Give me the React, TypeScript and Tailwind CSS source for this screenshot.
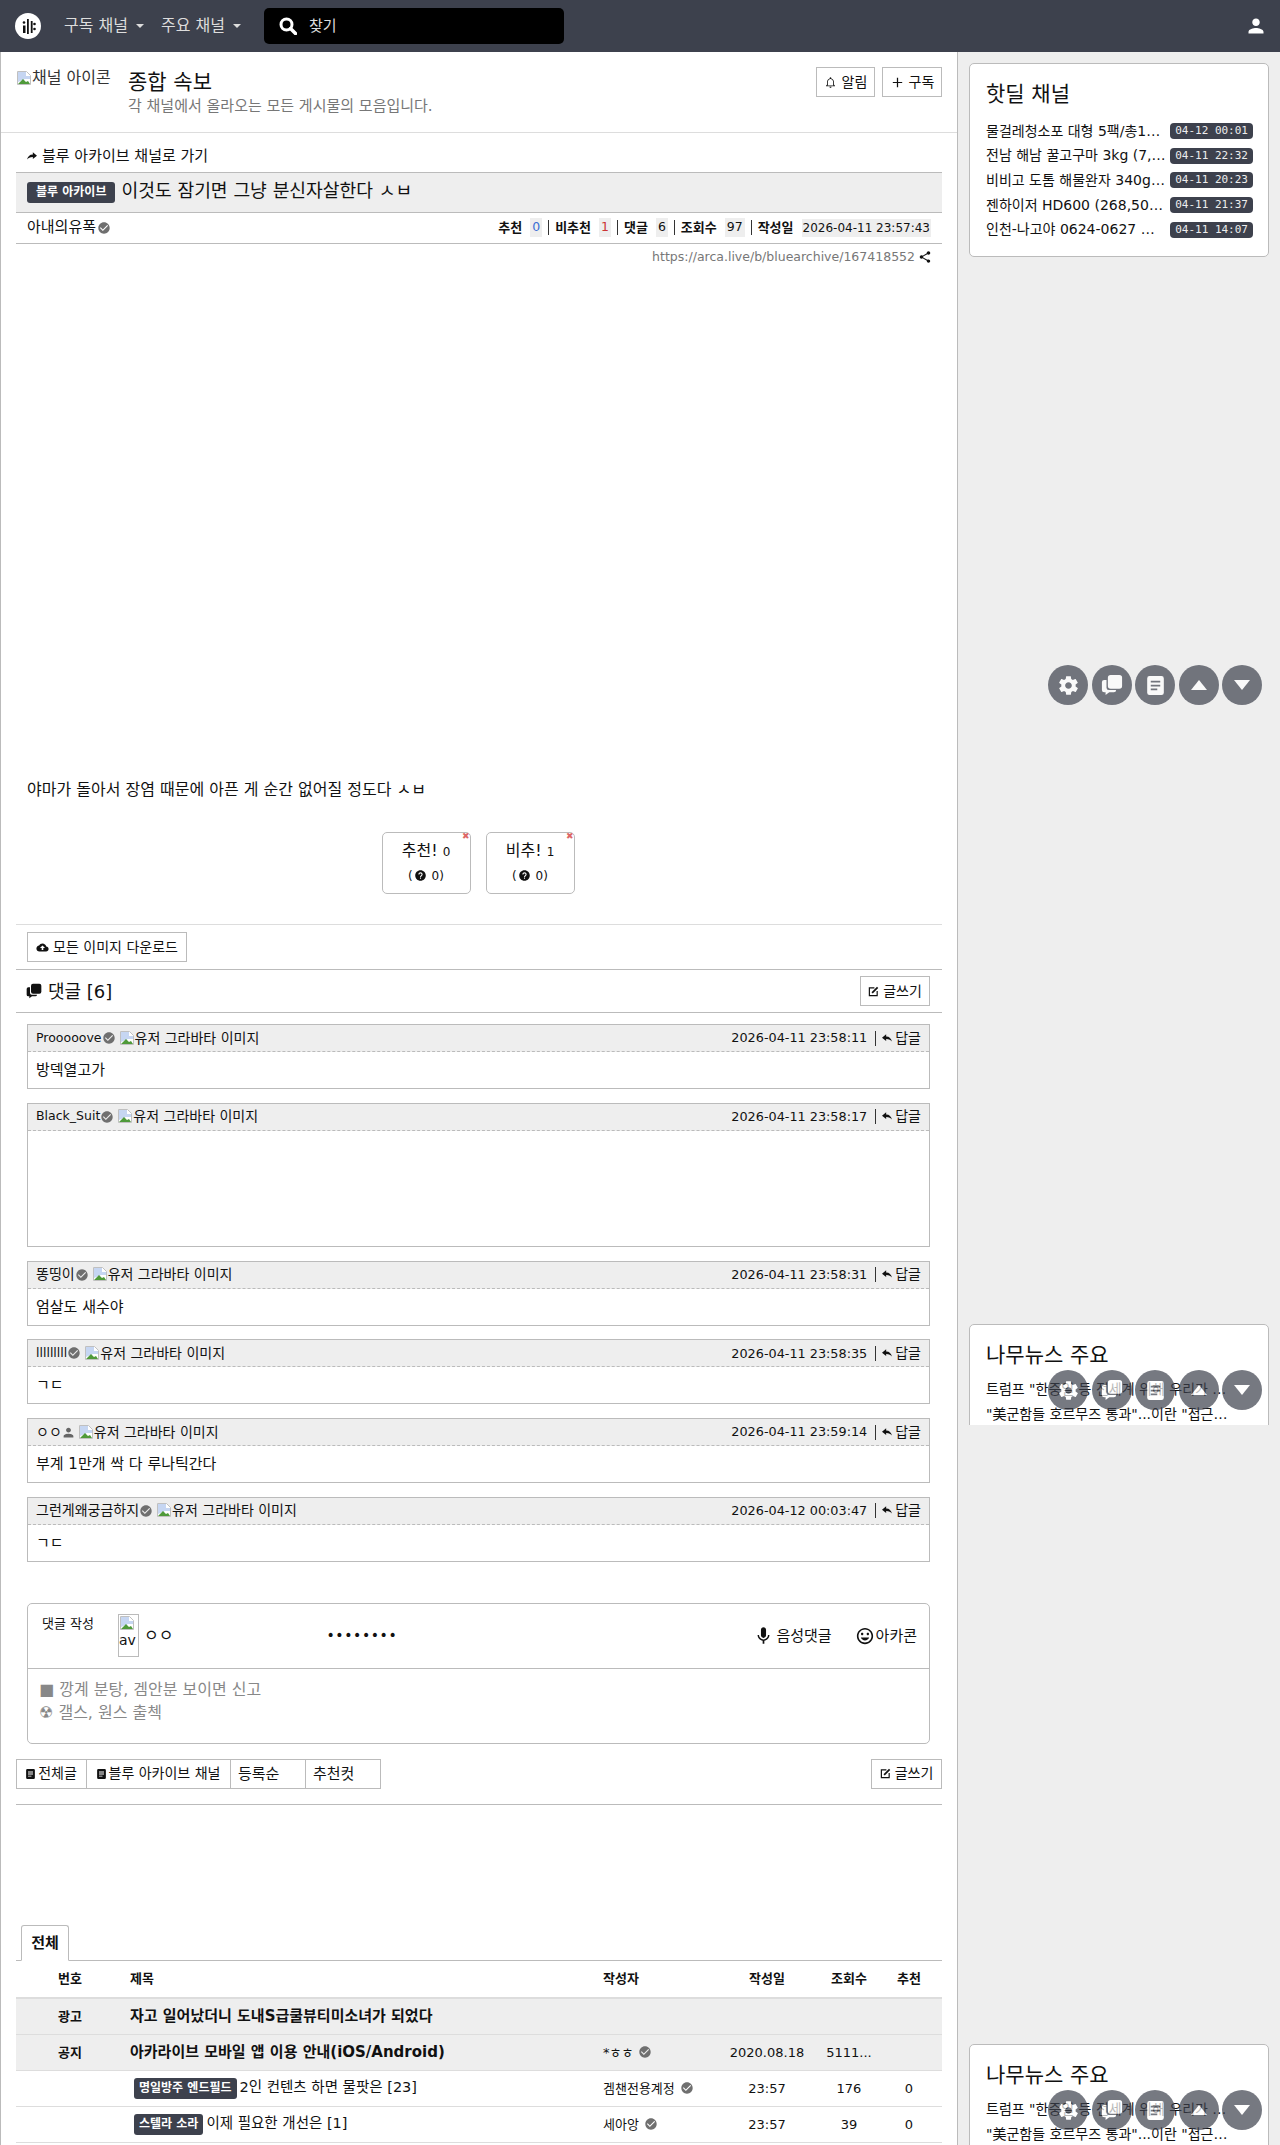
import React from "react";
import {
  IoMdSettings,
  IoMdCheckmarkCircle,
  IoMdShare,
  IoMdHelpCircle,
  IoMdMic,
  IoMdPerson,
  IoMdAdd,
  IoMdNotificationsOutline,
  IoMdHappy,
  IoMdCloudUpload,
} from "react-icons/io";

const dealRows = [
  ["물걸레청소포 대형 5팩/총100매 무료배송", "04-12 00:01"],
  ["전남 해남 꿀고구마 3kg (7,900원/무료)", "04-11 22:32"],
  ["비비고 도톰 해물완자 340g 3개 무료배송", "04-11 20:23"],
  ["젠하이저 HD600 (268,500원/무료배송)", "04-11 21:37"],
  ["인천-나고야 0624-0627 하계 특가 항공권", "04-11 14:07"],
];

const comments = [
  { name: "Prooooove", latin: true, time: "2026-04-11 23:58:11", body: "방덱열고가", h: "h-[36px]" },
  { name: "Black_Suit", latin: true, time: "2026-04-11 23:58:17", body: "", h: "h-[115px]" },
  { name: "똥띵이", time: "2026-04-11 23:58:31", body: "엄살도 새수야", h: "h-[36px]" },
  { name: "lllllllll", latin: true, time: "2026-04-11 23:58:35", body: "ㄱㄷ", h: "h-[36px]" },
  { name: "ㅇㅇ", time: "2026-04-11 23:59:14", body: "부계 1만개 싹 다 루나틱간다", h: "h-[36px]", guest: true },
  { name: "그런게왜궁금하지", time: "2026-04-12 00:03:47", body: "ㄱㄷ", h: "h-[36px]" },
];

const rowGrid = "grid grid-cols-[108px_479px_120px_88px_76px_44px] items-center";

const BrokenImage = () => (
  <svg viewBox="0 0 16 16" className="inline-block h-4 w-4 shrink-0 align-[-3px]">
    <path d="M1.500 1.500h9l4 4v9h-13z" fill="#fff" stroke="#c0c0c0" />
    <path d="M2 2h8v4h4v3L9 9 2 12z" fill="#c6d6f2" />
    <path d="M2 14l5-5 3 3 2-1 2 3z" fill="#4f9a3a" />
  </svg>
);

const Verified = () => <IoMdCheckmarkCircle className="inline-block h-[14px] w-[14px] shrink-0 text-[#6f6f6f]" />;

const ComposeIcon = () => (
  <svg viewBox="0 0 12 12" className="h-[11px] w-[11px] shrink-0" fill="none" stroke="#111">
    <path d="M7 2H1.500v8.500H10V5.500" strokeWidth="1.300" />
    <path d="M4.500 7.500L10.500 1.500" strokeWidth="2" />
  </svg>
);

const DocIcon = ({ className }: { className: string }) => (
  <svg viewBox="0 0 14 16" className={className}>
    <path
      fillRule="evenodd"
      d="M2 0h10a2 2 0 012 2v12a2 2 0 01-2 2H2a2 2 0 01-2-2V2a2 2 0 012-2zm1 4v1.500h8V4zm0 3.300v1.500h8V7.300zm0 3.300v1.500h5.500v-1.500z"
      fill="currentColor"
    />
  </svg>
);

const ChatIcon = ({ className }: { className: string }) => (
  <svg viewBox="0 0 24 24" className={className} fill="currentColor">
    <rect x="7.500" y="1" width="15.500" height="15" rx="3" />
    <path d="M6 6.500H3.500a2.500 2.500 0 00-2.500 2.500v8.500A2.500 2.500 0 003.500 20H5v3l4-3h5a2.500 2.500 0 002.500-2.500H8.500A2.500 2.500 0 016 15z" />
  </svg>
);

const ReplyIcon = () => (
  <svg viewBox="0 0 12 10" className="h-[9px] w-[10px] shrink-0" fill="#111">
    <path d="M0 4l5-4v2.500c4 0 6 2.500 7 6-1.500-2-3.500-3-7-3V8z" />
  </svg>
);

const FloatButtons = ({ top }: { top: string }) => (
  <div className={`absolute right-[18px] flex gap-[3.500px] text-white ${top}`}>
    <span className="flex h-10 w-10 items-center justify-center rounded-full bg-[#3d414d] opacity-70">
      <IoMdSettings className="h-[23px] w-[23px]" />
    </span>
    <span className="flex h-10 w-10 items-center justify-center rounded-full bg-[#3d414d] opacity-70">
      <ChatIcon className="h-[22px] w-[22px]" />
    </span>
    <span className="flex h-10 w-10 items-center justify-center rounded-full bg-[#3d414d] opacity-70">
      <DocIcon className="h-[19px] w-[17px]" />
    </span>
    <span className="flex h-10 w-10 items-center justify-center rounded-full bg-[#3d414d] opacity-70">
      <svg viewBox="0 0 16 10" className="h-[10px] w-4" fill="currentColor"><path d="M8 0l8 10H0z" /></svg>
    </span>
    <span className="flex h-10 w-10 items-center justify-center rounded-full bg-[#3d414d] opacity-70">
      <svg viewBox="0 0 16 10" className="h-[10px] w-4" fill="currentColor"><path d="M0 0h16L8 10z" /></svg>
    </span>
  </div>
);

const NewsCard = ({ wrapper }: { wrapper: string }) => (
  <div className={`overflow-hidden ${wrapper}`}>
    <div className="h-[194px] w-[300px] rounded-[5px] border border-[#bbb] bg-white pl-4 pr-[30px] pt-[17px]">
      <h3 className="text-[21px] leading-[26px]">나무뉴스 주요</h3>
      <p className="mt-[12px] truncate text-[14px] leading-[19px]">트럼프 "한중일 등 전세계 위해 우리가 호르무즈 통과"</p>
      <p className="mt-[6px] truncate text-[14px] leading-[19px]">"美군함들 호르무즈 통과"...이란 "접근하면 공격"</p>
    </div>
  </div>
);

const TableRow = ({
  no,
  title,
  badge,
  author,
  date,
  views,
  votes,
  notice,
}: {
  no?: string;
  title: string;
  badge?: string;
  author?: string;
  date?: string;
  views?: string;
  votes?: string;
  notice?: boolean;
}) => (
  <div className={`${rowGrid} h-9 border-b border-[#ddd] text-[13px] ${notice ? "bg-[#eee]" : ""}`}>
    <span className="text-center text-[13px] font-bold">{no}</span>
    <span className={`flex items-center gap-[3px] ${notice ? "pl-[6px] text-[15px] font-bold" : "pl-[10px] text-[14.500px]"}`}>
      {badge && (
        <span className="rounded-[3px] bg-[#3d414d] px-[5px] py-[2px] text-[12px] font-bold leading-[17px] text-white">
          {badge}
        </span>
      )}
      {title}
    </span>
    <span className="flex items-center gap-[5px] text-[13px]">
      {author}
      {author && <Verified />}
    </span>
    <span className="text-center">{date}</span>
    <span className="truncate text-center">{views}</span>
    <span className="text-center">{votes}</span>
  </div>
);

export default function App() {
  return (
    <div className="relative h-[2145px] overflow-hidden bg-white font-['DejaVu_Sans','Noto_Sans_CJK_KR',sans-serif] text-[#111]">
      {/* top nav */}
      <header className="flex h-[52px] items-center bg-[#3d414d] pl-[15px] pr-[14px] text-white">
        <svg viewBox="0 0 26 26" className="h-[26px] w-[26px] shrink-0">
          <circle cx="13" cy="13" r="13" fill="#fff" />
          <path d="M12 6h1.800v15H12zM8 12.500h2.500V20H8zM15.800 8h1.800v12h-1.800z" fill="#111" />
          <circle cx="9" cy="9.500" r="1.300" fill="#111" />
          <circle cx="19.500" cy="11" r="1.300" fill="#111" />
          <circle cx="19.500" cy="16" r="1.300" fill="#111" />
        </svg>
        <nav className="ml-[23px] flex items-center gap-[17px] text-[16px] leading-[22px] text-[#ddd]">
          <span className="flex items-center gap-[8px]">
            구독 채널
            <span className="h-0 w-0 border-x-[4px] border-t-[4px] border-x-transparent border-t-[#ddd]" />
          </span>
          <span className="flex items-center gap-[8px]">
            주요 채널
            <span className="h-0 w-0 border-x-[4px] border-t-[4px] border-x-transparent border-t-[#ddd]" />
          </span>
        </nav>
        <div className="ml-[23px] flex h-9 w-[300px] items-center gap-[12px] rounded-[5px] bg-black pl-[15px] text-[15px] text-[#ddd]">
          <svg viewBox="0 0 18 18" className="h-[18px] w-[18px]" fill="none" stroke="#fff">
            <circle cx="7.500" cy="7.500" r="5.500" strokeWidth="3" />
            <path d="M11.500 11.500L16.500 16.500" strokeWidth="3.500" strokeLinecap="round" />
          </svg>
          찾기
        </div>
        <IoMdPerson className="ml-auto h-[20px] w-[20px] text-white" />
      </header>

      <div className="flex">
        {/* main column */}
        <main className="w-[958px] shrink-0 border-x border-[#bbb]">
          <section className="flex h-[81px] border-b border-[#ddd] pl-[15px] pr-[15px] pt-[15px]">
            <div className="mt-px flex h-[20px] w-[96px] shrink-0 items-center overflow-hidden whitespace-nowrap text-[16px] text-[#333]">
              <BrokenImage />
              채널 아이콘
            </div>
            <div className="ml-[16px] flex-1 pt-[2px]">
              <h1 className="text-[21px] leading-[26px]">종합 속보</h1>
              <p className="mt-[1px] text-[15px] leading-[20px] text-[#777]">각 채널에서 올라오는 모든 게시물의 모음입니다.</p>
            </div>
            <div className="flex gap-[7px]">
              <span className="flex h-[30px] w-[59px] items-center justify-center gap-[5px] border border-[#bbb] text-[14px]">
                <IoMdNotificationsOutline className="h-[13px] w-[13px]" />
                알림
              </span>
              <span className="flex h-[30px] w-[60px] items-center justify-center gap-[4px] border border-[#bbb] text-[14px]">
                <IoMdAdd className="h-[15px] w-[15px]" />
                구독
              </span>
            </div>
          </section>

          <div className="mx-[15px]">
            <div className="flex h-[39px] items-center gap-[5px] pl-[11px] pt-[7px] text-[15px]">
              <svg viewBox="0 0 12 10" className="h-[9px] w-[10px] -scale-x-100" fill="#111">
                <path d="M0 4l5-4v2.500c4 0 6 2.500 7 6-1.500-2-3.500-3-7-3V8z" />
              </svg>
              블루 아카이브 채널로 가기
            </div>
            <div className="flex h-[41px] items-center gap-[6px] border-y border-[#bbb] bg-[#eee] pl-[11px] text-[18.200px]">
              <span className="rounded-[3px] bg-[#3d414d] px-[9px] text-[12px] font-bold leading-[21px] text-white">블루 아카이브</span>
              <span className="-mt-[3px]">이것도 잠기면 그냥 분신자살한다 ㅅㅂ</span>
            </div>
            <div className="-mt-px flex h-[32px] items-center justify-between border-b border-[#bbb] px-[11px] text-[12.500px]">
              <span className="flex items-center gap-[1px] text-[15px]">
                아내의유폭
                <Verified />
              </span>
              <span className="flex items-center gap-[6px]">
                <b className="text-[13px]">추천</b>
                <span className="ml-[2px] bg-[#eee] px-[2px] text-[#3b6fd4]">0</span>
                <span className="h-[15px] border-l border-[#333]" />
                <b className="text-[13px]">비추천</b>
                <span className="ml-[2px] bg-[#eee] px-[2px] text-[#c33]">1</span>
                <span className="h-[15px] border-l border-[#333]" />
                <b className="text-[13px]">댓글</b>
                <span className="ml-[2px] bg-[#eee] px-[2px]">6</span>
                <span className="h-[15px] border-l border-[#333]" />
                <b className="text-[13px]">조회수</b>
                <span className="ml-[2px] bg-[#eee] px-[2px]">97</span>
                <span className="h-[15px] border-l border-[#333]" />
                <b className="text-[13px]">작성일</b>
                <span className="ml-[2px] bg-[#eee] px-[1px] text-[12px]">2026-04-11 23:57:43</span>
              </span>
            </div>
            <div className="flex h-[26px] items-center justify-end gap-[3px] pr-[10px] text-[12.500px] text-[#777]">
              https://arca.live/b/bluearchive/167418552
              <IoMdShare className="h-[14px] w-[14px] text-[#111]" />
            </div>

            {/* article body */}
            <div className="pl-[11px] pt-[509px] text-[16px] leading-[22px]">야마가 돌아서 장염 때문에 아픈 게 순간 없어질 정도다 ㅅㅂ</div>
            <div className="mt-[31px] flex justify-center gap-[15px] pr-[2px]">
              {[
                ["추천!", "0"],
                ["비추!", "1"],
              ].map(([label, count]) => (
                <div key={label} className="relative flex h-[62px] w-[89px] flex-col items-center justify-center rounded-[5px] border border-[#bbb] leading-[24px]">
                  <span className="absolute -top-[2px] right-0 text-[9px] leading-[10px] text-[#d66]">✖</span>
                  <span className="text-[16px]">
                    {label} <span className="text-[12px]">{count}</span>
                  </span>
                  <span className="flex items-center text-[12px]">
                    (<IoMdHelpCircle className="mx-[1px] h-[13px] w-[13px]" />&nbsp;0)
                  </span>
                </div>
              ))}
            </div>

            <div className="mt-[30px] border-y border-t-[#ddd] border-b-[#bbb] pb-[7px] pl-[11px] pt-[7px]">
              <span className="flex h-[30px] w-[160px] items-center justify-center gap-[4px] border border-[#bbb] text-[14px]">
                <IoMdCloudUpload className="h-[13px] w-[13px]" />
                모든 이미지 다운로드
              </span>
            </div>
            <div className="flex h-[43px] items-center justify-between border-b border-[#bbb] pl-[10px] pr-[12px]">
              <span className="flex items-center gap-[6px] text-[18px]">
                <ChatIcon className="h-[16px] w-[16px]" />
                댓글 [6]
              </span>
              <span className="flex h-[30px] w-[70px] items-center justify-center gap-[4px] border border-[#bbb] text-[14px]">
                <ComposeIcon />
                글쓰기
              </span>
            </div>

            {/* comments */}
            <div className="ml-[11px] mr-[12px] mt-[11px] flex flex-col gap-[13.750px]">
              {comments.map((c) => (
                <div key={c.time} className="border border-[#bbb]">
                  <div className="flex h-[27px] items-center justify-between border-b border-dashed border-[#bbb] bg-[#eee] px-[8px] text-[14px]">
                    <span className="flex items-center whitespace-nowrap">
                      <span className={c.latin ? "text-[12.500px]" : ""}>{c.name}</span>
                      {c.guest ? <IoMdPerson className="h-[13px] w-[13px] text-[#666]" /> : <Verified />}
                      <span className="ml-[3px]">
                        <BrokenImage />
                        유저 그라바타 이미지
                      </span>
                    </span>
                    <span className="flex items-center gap-[8px]">
                      <span className="text-[12.800px]">{c.time}</span>
                      <span className="h-[15px] border-l border-[#333]" />
                      <span className="-ml-[2px] flex items-center gap-[3px]">
                        <ReplyIcon />
                        답글
                      </span>
                    </span>
                  </div>
                  <div className={`${c.h} px-[8px] pt-[8px] text-[15px] leading-[20px]`}>{c.body}</div>
                </div>
              ))}
            </div>

            {/* comment form */}
            <div className="ml-[11px] mr-[12px] mt-[41px] h-[141px] rounded-[5px] border border-[#bbb]">
              <div className="relative flex h-[65px] items-center border-b border-[#bbb] pr-[12px]">
                <span className="absolute left-[14px] top-[10px] text-[13px]">댓글 작성</span>
                <div className="ml-[90px] h-[43px] w-[21px] overflow-hidden border border-[#bbb] text-[14px] leading-[17px]">
                  <BrokenImage />
                  av
                </div>
                <span className="ml-[5px] text-[16px]">ㅇㅇ</span>
                <span className="ml-[153px] text-[14px] tracking-[0.6px]">••••••••</span>
                <span className="ml-auto flex items-center gap-[3px] text-[15px]">
                  <IoMdMic className="h-[19px] w-[19px]" />
                  음성댓글
                </span>
                <span className="ml-[23px] flex items-center gap-[1px] text-[15px]">
                  <IoMdHappy className="h-[20px] w-[20px]" />
                  아카콘
                </span>
              </div>
              <div className="pl-[11px] pt-[9px] text-[16px] leading-[23px] text-[#888]">
                <p>■ 깡계 분탕, 겜안분 보이면 신고</p>
                <p>☢ 갤스, 원스 출첵</p>
              </div>
            </div>

            {/* list toolbar */}
            <div className="mt-[15px] flex h-[46px] border-b border-[#bbb] text-[14px]">
              <span className="flex h-[30px] w-[71px] items-center justify-center gap-[3px] border border-[#bbb]">
                <DocIcon className="h-[10px] w-[9px]" />
                전체글
              </span>
              <span className="-ml-px flex h-[30px] w-[145px] items-center justify-center gap-[3px] border border-[#bbb]">
                <DocIcon className="h-[10px] w-[9px]" />
                블루 아카이브 채널
              </span>
              <span className="-ml-px flex h-[30px] w-[76px] items-center border border-[#bbb] pl-[7px] text-[15px]">등록순</span>
              <span className="-ml-px flex h-[30px] w-[76px] items-center border border-[#bbb] pl-[7px] text-[15px]">추천컷</span>
              <span className="ml-auto flex h-[30px] w-[71px] items-center justify-center gap-[4px] border border-[#bbb]">
                <ComposeIcon />
                글쓰기
              </span>
            </div>

            {/* article list */}
            <div className="mt-[120px] flex h-[36px] items-end border-b border-[#bbb] pl-[5px]">
              <span className="-mb-px flex h-[36px] w-[48px] items-center justify-center rounded-t-[3px] border border-b-white border-[#bbb] text-[15px] font-bold">전체</span>
            </div>
            <div className={`${rowGrid} h-[38px] border-b-2 border-[#ddd] text-[13px] font-bold`}>
              <span className="text-center">번호</span>
              <span className="pl-[6px]">제목</span>
              <span>작성자</span>
              <span className="text-center">작성일</span>
              <span className="text-center">조회수</span>
              <span className="text-center">추천</span>
            </div>
            <TableRow no="광고" title="자고 일어났더니 도내S급쿨뷰티미소녀가 되었다" notice />
            <TableRow no="공지" title="아카라이브 모바일 앱 이용 안내(iOS/Android)" author="*ㅎㅎ" date="2020.08.18" views="5111..." notice />
            <TableRow title="2인 컨텐츠 하면 물팟은 [23]" badge="명일방주 엔드필드" author="겜챈전용계정" date="23:57" views="176" votes="0" />
            <TableRow title="이제 필요한 개선은 [1]" badge="스텔라 소라" author="세아앙" date="23:57" views="39" votes="0" />
          </div>
        </main>

        {/* right column */}
        <aside className="flex-1 bg-[#eee] pl-[11px] pt-[11px]">
          <div className="h-[194px] w-[300px] rounded-[5px] border border-[#bbb] bg-white pl-4 pr-[15px] pt-[17px]">
            <h3 className="text-[21px] leading-[26px]">핫딜 채널</h3>
            <div className="mt-[14px] flex flex-col gap-[4.700px]">
              {dealRows.map(([title, date]) => (
                <div key={date} className="flex h-5 items-center gap-[3px] text-[14px]">
                  <span className="min-w-0 flex-1 truncate">{title}</span>
                  <span className="shrink-0 rounded-[4px] bg-[#3d414d] px-[5px] font-['DejaVu_Sans_Mono',monospace] text-[11px] leading-[16px] text-[#eee]">{date}</span>
                </div>
              ))}
            </div>
          </div>
          <NewsCard wrapper="mt-[1067px] h-[101px]" />
          <NewsCard wrapper="mt-[619px] h-[194px]" />
        </aside>
      </div>

      <FloatButtons top="top-[665px]" />
      <FloatButtons top="top-[1370px]" />
      <FloatButtons top="top-[2090px]" />
    </div>
  );
}
